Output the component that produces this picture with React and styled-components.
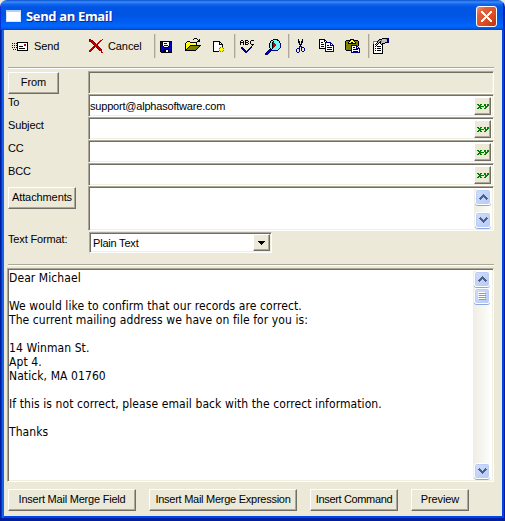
import React from 'react';
import styled, { createGlobalStyle } from 'styled-components';

const Global = createGlobalStyle`
  * { box-sizing: border-box; }
  body { margin: 0; background: #ece9d8; overflow: hidden; }
  button { appearance: none; border-radius: 0; margin: 0; }
`;

const Frame = styled.div`
  width: 505px;
  height: 521px;
  display: flex;
  flex-direction: column;
  overflow: hidden;
  border-radius: 7px 7px 0 0;
  background: #ece9d8;
  font: 11px/13px "Liberation Sans", Arial, sans-serif;
  color: #000;
`;

const TitleBar = styled.header`
  flex: 0 0 30px;
  display: flex;
  align-items: center;
  padding: 2px 6px 0 5px;
  border-left: 1px solid #0831d9;
  border-right: 2px solid #0029b8;
  background: linear-gradient(#0a4fd0 0, #3a8cf8 2px, #1468ee 4px, #0055e4 7px, #0054e3 15px, #005cf0 21px, #0266fc 26px, #005bf0 28px, #0043cf 30px);
`;

const AppIcon = styled.span`
  width: 15px;
  height: 12px;
  background: #fff;
  border: 1px solid #d8e4f8;
  border-top: 2px solid #b4d0f8;
`;

const Title = styled.h1`
  flex: 1;
  margin: 0 0 0 5px;
  font: bold 13px/18px "Open Sans", "Noto Sans", sans-serif;
  letter-spacing: -0.35px;
  color: #fff;
  text-shadow: 1px 1px 0 #0a2a88;
`;

const Close = styled.button`
  width: 21px;
  height: 21px;
  padding: 0;
  border: 1px solid #fff;
  border-radius: 3px;
  background: linear-gradient(135deg, #ee9478 0, #e2603c 25%, #dc4a22 65%, #b83410 100%);
  display: grid;
  place-items: center;
`;

const OuterEdge = styled.div`
  flex: 1;
  display: flex;
  min-height: 0;
  padding: 0 2px 3px 1px;
  background: #001ea0;
`;

const InnerEdge = styled.div`
  flex: 1;
  display: flex;
  min-height: 0;
  padding: 0 2px 2px 3px;
  background: linear-gradient(90deg, #0831d9 0, #0831d9 1px, #1660ec 1px, #1660ec 3px, #0046e4 3px);
`;

const Panel = styled.div`
  flex: 1;
  min-width: 0;
  display: flex;
  flex-direction: column;
  padding: 0 8px 0 3px;
  background: #ece9d8;
`;

const Toolbar = styled.div`
  height: 37px;
  flex: none;
  display: flex;
  align-items: flex-start;
  padding: 4px 0 0 5px;
`;

const Tool = styled.button`
  width: ${p => p.$w}px;
  height: 24px;
  flex: none;
  padding: ${p => p.$top || 0}px 0 0 ${p => p.$left || 0}px;
  border: 0;
  background: none;
  display: flex;
  align-items: flex-start;
  font: 11px/13px "Liberation Sans", Arial, sans-serif;
  letter-spacing: -0.1px;
  color: #000;
`;

const ToolText = styled.span`
  margin: ${p => p.$top || 0}px 0 0 ${p => p.$gap}px;
`;

const Separator = styled.span`
  width: 2px;
  height: 24px;
  flex: none;
  border-left: 1px solid #aca899;
  border-right: 1px solid #d6d2c2;
`;

const Rule = styled.hr`
  width: 486px;
  height: 2px;
  flex: none;
  margin: 0 0 ${p => p.$after}px 1px;
  border: 0;
  border-top: 1px solid #aca899;
  border-bottom: 1px solid #fff;
`;

const Form = styled.div`
  display: grid;
  grid-template-columns: 80px 406px;
  grid-template-rows: repeat(5, 23px) 46px 32px;
  padding-left: 1px;
  flex: none;
`;

const Label = styled.label`
  padding-top: ${p => p.$top ?? 2}px;
  letter-spacing: -0.15px;
`;

const Field = styled.div`
  height: ${p => p.$h || 23}px;
  display: flex;
  justify-content: space-between;
  border: 1px solid;
  border-color: #aca899 #fff #fff #aca899;
  box-shadow: inset 1px 1px 0 #716f64, inset -1px -1px 0 #f1efe2;
  padding: 2px 2px 2px 1px;
  background: ${p => (p.$off ? '#ece9d8' : '#fff')};
  letter-spacing: -0.2px;
`;

const FieldText = styled.span`
  padding-top: 3px;
`;

const Raised = styled.button`
  width: ${p => p.$w}px;
  height: ${p => p.$h || 22}px;
  margin-top: ${p => p.$mt || 0}px;
  padding: 0 0 ${p => (p.$icon ? 0 : 2)}px;
  flex: none;
  border: 1px solid;
  border-color: #fff #716f64 #716f64 #fff;
  box-shadow: inset -1px -1px 0 #aca899;
  background: #ece9d8;
  display: grid;
  place-items: center;
  font: 11px/13px "Liberation Sans", Arial, sans-serif;
  letter-spacing: ${p => p.$ls ?? -0.1}px;
  white-space: nowrap;
  color: #000;
`;

const Combo = styled(Field)`
  width: 183px;
  margin: 0 0 0 1px;
  padding: 1px 1px 1px 3px;
`;

const ScrollTrack = styled.div`
  width: 17px;
  flex: none;
  display: flex;
  flex-direction: column;
  gap: 1px;
  background: linear-gradient(90deg, #eeede5, #fdfdfa);
`;

const ScrollButton = styled.button`
  width: 16px;
  height: 16px;
  flex: none;
  margin: ${p => (p.$end ? 'auto' : 0)} 0 0 1px;
  padding: 0;
  border: 1px solid #fff;
  border-radius: 3px;
  background: linear-gradient(135deg, #d0ddfd, #b6caf8);
  box-shadow: inset 0 0 0 1px #bccdf6, 0 1px 0 #8ca8dc;
  display: grid;
  place-items: center;
`;

const Message = styled.div`
  width: 487px;
  height: 214px;
  flex: none;
  display: flex;
  justify-content: space-between;
  border: 1px solid;
  border-color: #aca899 #fff #fff #aca899;
  box-shadow: inset 1px 1px 0 #716f64, inset -1px -1px 0 #f1efe2;
  padding: 2px 3px 2px 1px;
  background: #fff;
`;

const MessageText = styled.div`
  white-space: pre;
  font: 12px/14px "DejaVu Sans Condensed", "Noto Sans", sans-serif;
  letter-spacing: 0.085px;
`;

const Footer = styled.footer`
  display: flex;
  gap: 13px;
  padding: 7px 0 0 1px;
`;

const Svg = styled.svg`
  display: block;
  flex: none;
`;

const colors = {
  k: '#000', w: '#fff', b: '#000084', u: '#0000c8', r: '#c00000', d: '#800000',
  y: '#ffff00', o: '#808000', l: '#ffff9c', g: '#848484', s: '#c0c0c0',
  c: '#70f4f8', n: '#008000', a: '#4d6185', t: '#7898e0',
};

function Pixels({ rows }) {
  const w = Math.max(...rows.map(r => r.length));
  const runs = [];
  rows.forEach((row, y) => {
    for (let x = 0; x < row.length;) {
      let end = x + 1;
      while (row[end] === row[x]) end++;
      if (colors[row[x]]) {
        runs.push(<rect key={`${x}-${y}`} x={x} y={y} width={end - x} height="1" fill={colors[row[x]]} />);
      }
      x = end;
    }
  });
  return (
    <Svg width={w} height={rows.length} viewBox={`0 0 ${w} ${rows.length}`} shapeRendering="crispEdges">
      {runs}
    </Svg>
  );
}

const icons = {
  send: [
    '.....kkkkkkkkkkk',
    'b.b.bkwwwwwwwwwk',
    '.....kwwwwwwrrwk',
    'b.b.bkwwwwwwrrwk',
    '.....kwkkkkwwwwk',
    'b.b.bkwwwwwwwwwk',
    '.....kwkkkkkkwwk',
    '.b.b.kwwwwwwwwwk',
    '.....kkkkkkkkkkk',
  ],
  cancel: [
    'dd...........r',
    'drdd.......rr.',
    'ddrrd.....rr..',
    '..drrd...rr...',
    '...drrd.rd....',
    '....drrrd.....',
    '.....drrd.....',
    '....rdrrdd....',
    '...rdd.drrd...',
    '..rrd...drrd..',
    '.rrd.....drrd.',
    'rrd.......drr.',
    'rr..........d.',
    '............rr',
  ],
  save: [
    'kkkkkkkkkkkk',
    'kukwwwwwwkuk',
    'kukwuuuwwkuk',
    'kukwwwwwwkuk',
    'kukwuuuuwkuk',
    'kuukwwwwkuuk',
    'kuuukkkkuuuk',
    'kuuuuuuuuuuk',
    'kuukkkkkkuuk',
    'kuukkkwwkuuk',
    'kuukkkwwkuuk',
    '.kkkkkkkkkkk',
  ],
  open: [
    '.........kkk....',
    '........k...k.k.',
    '.............kk.',
    '..kkk.......kkk.',
    '.klylkkkkkkk....',
    'klylylylylyk....',
    'kylylylylylk....',
    'klylykkkkkkkkkkk',
    'kylykoooooooook.',
    'klykoooooooook..',
    'kykoooooooook...',
    'kkoooooooook....',
    'kkkkkkkkkkk.....',
  ],
  add: [
    'kkkkkkk......',
    'kwwwwwkk.....',
    'kwwwwwkwk....',
    'kwwwwwkkkk...',
    'kwwwwwwwwk...',
    'kwwwwwwwyk...',
    'kwwwwwyoyoy..',
    'kwwwwwoyyyo..',
    'kwwwwyyylyyyy',
    'kwwwwwoyyyo..',
    'kkkkkkyoyoy..',
    '........y....',
  ],
  spell: [
    '.kk..kkk...kkk',
    'k..k.k..k.k...',
    'kkkk.kkk..k...',
    'k..k.k..k.k...',
    'k..k.kkk...kkb',
    '............b.',
    '...........b..',
    '.bb.......bb..',
    '.bbb.....bb...',
    '..bbb...bb....',
    '...bbb.bb.....',
    '....bbbb......',
    '.....bb.......',
  ],
  find: [
    '........kkkkk...',
    '......kkcccckk..',
    '.....kcckccccck.',
    '.....kckrccccck.',
    '....kcckrrcccccb',
    '....kcckrrrccccb',
    '....kcckrrrccccb',
    '....kcckrrcccccb',
    '....kcckrcccccck',
    '.....kckccccccb.',
    '....bbkccccccb..',
    '...buubbbbbbb...',
    '..buub..........',
    '.buub...........',
    'buub............',
    'bbb.............',
  ],
  cut: [
    '..k...k..',
    '..k...k..',
    '..kk.kk..',
    '..kk.kk..',
    '...k.k...',
    '...kkk...',
    '....k....',
    '...bbb...',
    '...b.bbb.',
    '.bbb.b..b',
    'b..b.b..b',
    'b..b.b..b',
    'b..b..bb.',
    '.bb......',
  ],
  copy: [
    'kkkkkk.........',
    'kwwwwkk........',
    'kwwwwkwk.......',
    'kwkkwwbbbbbb...',
    'kwwwwwbwwwwbb..',
    'kwkkkwbwwwwbwb.',
    'kwwwwwbwkkwbbbb',
    'kwkkkwbwwwwwwwb',
    'kwwwwwbwkkkkkwb',
    'kkkkkkbwwwwwwwb',
    '......bwkkkkkwb',
    '......bwwwwwwwb',
    '......bbbbbbbbb',
  ],
  paste: [
    '.....kkkk......',
    '.kkkkkyykkkkk..',
    'koookyyyykoook.',
    'kookyykkyykook.',
    'kookkkkkkkkook.',
    'kooooooooooook.',
    'kooooobbbbbbok.',
    'kooooobwwwwbb..',
    'kooooobwkkwbwb.',
    'kooooobwwwwbbbb',
    'kooooobwkkkkkwb',
    '.kkkkkbwwwwwwwb',
    '......bwkkkkkwb',
    '......bbbbbbbbb',
  ],
  props: [
    '.........kkkkkbb',
    '......kkkssssgbb',
    '.....kgsgsssssbb',
    'ggggkgskgsssssbb',
    'gwwwkskksssskkbb',
    'gwwkskwkskkk....',
    'kwkskwwwkk......',
    'kwwkwwwwwk......',
    'kwkwkkkkwk......',
    'kwwwwwwwwk......',
    'kwkwkkkkwk......',
    'kwwwwwwwwk......',
    'kwkwkkkkwk......',
    'kwwwwwwwwk......',
    'kwwwwwwwwk......',
    'kkkkkkkkkk......',
  ],
  xy: [
    'nn.nn..nn.nn',
    '.nnn...nn.nn',
    '..nnnnn.nnn.',
    '.nnn....nn..',
    'nn.nn..nn...',
  ],
  up: ['....a....', '...aaa...', '..aaaaa..', '.aaa.aaa.', 'aaa...aaa', '.a.....a.'],
  down: ['.a.....a.', 'aaa...aaa', '.aaa.aaa.', '..aaaaa..', '...aaa...', '....a....'],
  grip: ['wwwwwww.', '.ttttttt', 'wwwwwww.', '.ttttttt', 'wwwwwww.', '.ttttttt', 'wwwwwww.', '.ttttttt'],
  drop: ['kkkkkkk', '.kkkkk.', '..kkk..', '...k...'],
  close: [
    'ww.......ww', 'www.....www', '.www...www.', '..www.www..', '...wwwww...', '....www....',
    '...wwwww...', '..www.www..', '.www...www.', 'www.....www', 'ww.......ww',
  ],
};

const message = `Dear Michael

We would like to confirm that our records are correct.
The current mailing address we have on file for you is:

14 Winman St.
Apt 4.
Natick, MA 01760

If this is not correct, please email back with the correct information.

Thanks`;

function MergeField({ children }) {
  return (
    <Field>
      <FieldText>{children}</FieldText>
      <Raised $icon $w={17} $h={18}><Pixels rows={icons.xy} /></Raised>
    </Field>
  );
}

export default function App() {
  return (
    <Frame>
      <Global />
      <TitleBar>
        <AppIcon />
        <Title>Send an Email</Title>
        <Close aria-label="Close"><Pixels rows={icons.close} /></Close>
      </TitleBar>
      <OuterEdge>
        <InnerEdge>
          <Panel>
            <Toolbar>
              <Tool $w={77} $top={8}><Pixels rows={icons.send} /><ToolText $gap={6} $top={-2}>Send</ToolText></Tool>
              <Tool $w={65} $top={5}><Pixels rows={icons.cancel} /><ToolText $gap={5} $top={1}>Cancel</ToolText></Tool>
              <Separator />
              <Tool $w={27} $left={4} $top={7}><Pixels rows={icons.save} /></Tool>
              <Tool $w={28} $left={2} $top={4}><Pixels rows={icons.open} /></Tool>
              <Tool $w={23} $left={2} $top={7}><Pixels rows={icons.add} /></Tool>
              <Separator />
              <Tool $w={28} $left={4} $top={6}><Pixels rows={icons.spell} /></Tool>
              <Tool $w={24} $left={1} $top={5}><Pixels rows={icons.find} /></Tool>
              <Separator />
              <Tool $w={25} $left={6} $top={5}><Pixels rows={icons.cut} /></Tool>
              <Tool $w={28} $left={4} $top={5}><Pixels rows={icons.copy} /></Tool>
              <Tool $w={25} $left={2} $top={5}><Pixels rows={icons.paste} /></Tool>
              <Separator />
              <Tool $w={24} $left={3} $top={4}><Pixels rows={icons.props} /></Tool>
            </Toolbar>
            <Rule $after={2} />
            <Form>
              <Raised $w={51} $mt={1}>From</Raised>
              <Field $off />
              <Label>To</Label>
              <MergeField>support@alphasoftware.com</MergeField>
              <Label>Subject</Label>
              <MergeField />
              <Label>CC</Label>
              <MergeField />
              <Label>BCC</Label>
              <MergeField />
              <Raised $w={68} $mt={1}>Attachments</Raised>
              <Field $h={45}>
                <span />
                <ScrollTrack>
                  <ScrollButton><Pixels rows={icons.up} /></ScrollButton>
                  <ScrollButton $end><Pixels rows={icons.down} /></ScrollButton>
                </ScrollTrack>
              </Field>
              <Label $top={1}>Text Format:</Label>
              <Combo $h={21}>
                <FieldText>Plain Text</FieldText>
                <Raised $icon $w={17} $h={17}><Pixels rows={icons.drop} /></Raised>
              </Combo>
            </Form>
            <Rule $after={2} />
            <Message>
              <MessageText>{message}</MessageText>
              <ScrollTrack>
                <ScrollButton><Pixels rows={icons.up} /></ScrollButton>
                <ScrollButton><Pixels rows={icons.grip} /></ScrollButton>
                <ScrollButton $end><Pixels rows={icons.down} /></ScrollButton>
              </ScrollTrack>
            </Message>
            <Footer>
              <Raised $w={128} $ls={-0.22}>Insert Mail Merge Field</Raised>
              <Raised $w={148} $ls={-0.26}>Insert Mail Merge Expression</Raised>
              <Raised $w={88} $ls={-0.35}>Insert Command</Raised>
              <Raised $w={58}>Preview</Raised>
            </Footer>
          </Panel>
        </InnerEdge>
      </OuterEdge>
    </Frame>
  );
}
